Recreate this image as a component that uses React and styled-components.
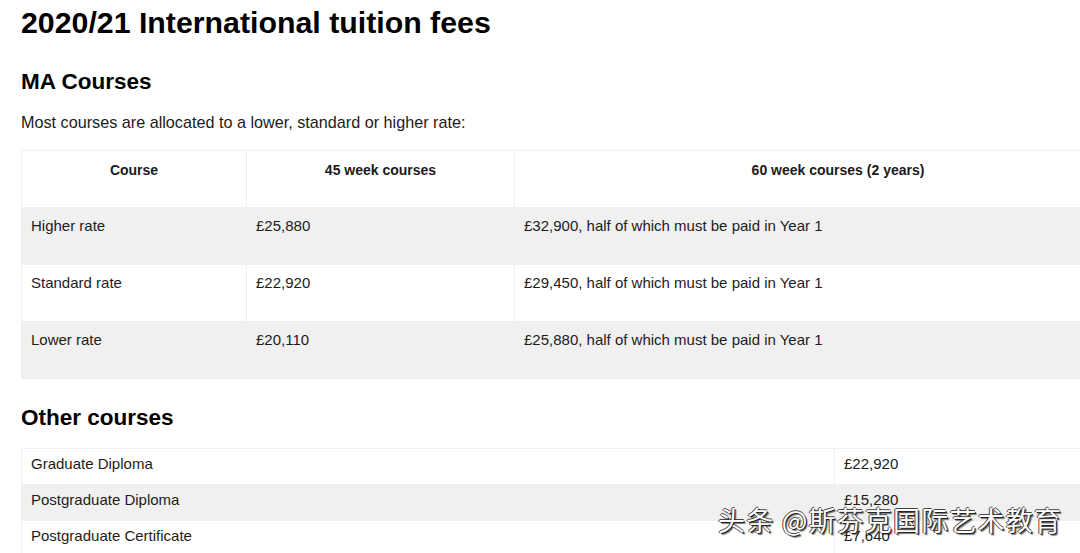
import styled, { createGlobalStyle } from 'styled-components';

const Global = createGlobalStyle`
  html, body {
    margin: 0;
    padding: 0;
    background: #fff;
    overflow: hidden;
  }
  body {
    font-family: "Liberation Sans", Arial, Helvetica, sans-serif;
    color: #1c1c1c;
  }
`;

const Page = styled.div`
  position: relative;
  width: 1080px;
  height: 553px;
  overflow: hidden;
  padding: 6px 0 0 21px;
  box-sizing: border-box;
`;

const Title = styled.h1`
  margin: 0;
  font-size: 30.3px;
  line-height: 34px;
  font-weight: 700;
  color: #000;
`;

const Section = styled.h2`
  margin: ${(p) => p.$top}px 0 0;
  font-size: 22.5px;
  line-height: 26px;
  font-weight: 700;
  color: #000;
`;

const Intro = styled.p`
  margin: 18px 0 0;
  font-size: 16.2px;
  line-height: 18px;
`;

const Table = styled.table`
  width: 1141px;
  margin-top: ${(p) => p.$top}px;
  border-collapse: collapse;
  table-layout: fixed;
  font-size: 15px;
  line-height: 18px;
`;

const Row = styled.tr`
  background: ${(p) => (p.$shaded ? '#f0f0f0' : '#fff')};
`;

const Head = styled.th`
  height: 57px;
  box-sizing: border-box;
  padding: 10px 9px 0;
  vertical-align: top;
  text-align: center;
  font-size: 14px;
  font-weight: 700;
  color: #1a1a1a;
  border: 1px solid #efefef;
`;

const Cell = styled.td`
  height: ${(p) => (p.$compact ? 36 : 57)}px;
  box-sizing: border-box;
  padding: ${(p) => (p.$compact ? 6 : 9)}px 9px 0;
  vertical-align: top;
  border: 1px solid #efefef;
`;

const Watermark = styled.div`
  position: absolute;
  left: 718px;
  top: 502px;
  font-family: "Noto Sans CJK SC", "Liberation Sans", sans-serif;
  font-size: 27px;
  line-height: 36px;
  letter-spacing: 1.2px;
  color: #fff;
  white-space: nowrap;
  text-shadow: 1px 1px 0 #222, -1px 0 0 #444, 0 -1px 0 #444, 2px 2px 1px rgba(0, 0, 0, 0.5);
`;

const maRows = [
  ['Higher rate', '£25,880', '£32,900, half of which must be paid in Year 1'],
  ['Standard rate', '£22,920', '£29,450, half of which must be paid in Year 1'],
  ['Lower rate', '£20,110', '£25,880, half of which must be paid in Year 1'],
];

const otherRows = [
  ['Graduate Diploma', '£22,920'],
  ['Postgraduate Diploma', '£15,280'],
  ['Postgraduate Certificate', '£7,640'],
];

export default function App() {
  return (
    <Page>
      <Global />
      <Title>2020/21 International tuition fees</Title>
      <Section $top={29}>MA Courses</Section>
      <Intro>Most courses are allocated to a lower, standard or higher rate:</Intro>
      <Table $top={19}>
        <colgroup>
          <col style={{ width: 225 }} />
          <col style={{ width: 268 }} />
          <col />
        </colgroup>
        <thead>
          <tr>
            <Head>Course</Head>
            <Head>45 week courses</Head>
            <Head>60 week courses (2 years)</Head>
          </tr>
        </thead>
        <tbody>
          {maRows.map((r, i) => (
            <Row key={r[0]} $shaded={i % 2 === 0}>
              {r.map((c) => (
                <Cell key={c}>{c}</Cell>
              ))}
            </Row>
          ))}
        </tbody>
      </Table>
      <Section $top={26}>Other courses</Section>
      <Table $top={17}>
        <colgroup>
          <col style={{ width: 813 }} />
          <col />
        </colgroup>
        <tbody>
          {otherRows.map((r, i) => (
            <Row key={r[0]} $shaded={i % 2 === 1}>
              <Cell $compact>{r[0]}</Cell>
              <Cell $compact>{r[1]}</Cell>
            </Row>
          ))}
        </tbody>
      </Table>
      <Watermark>头条 @斯芬克国际艺术教育</Watermark>
    </Page>
  );
}
